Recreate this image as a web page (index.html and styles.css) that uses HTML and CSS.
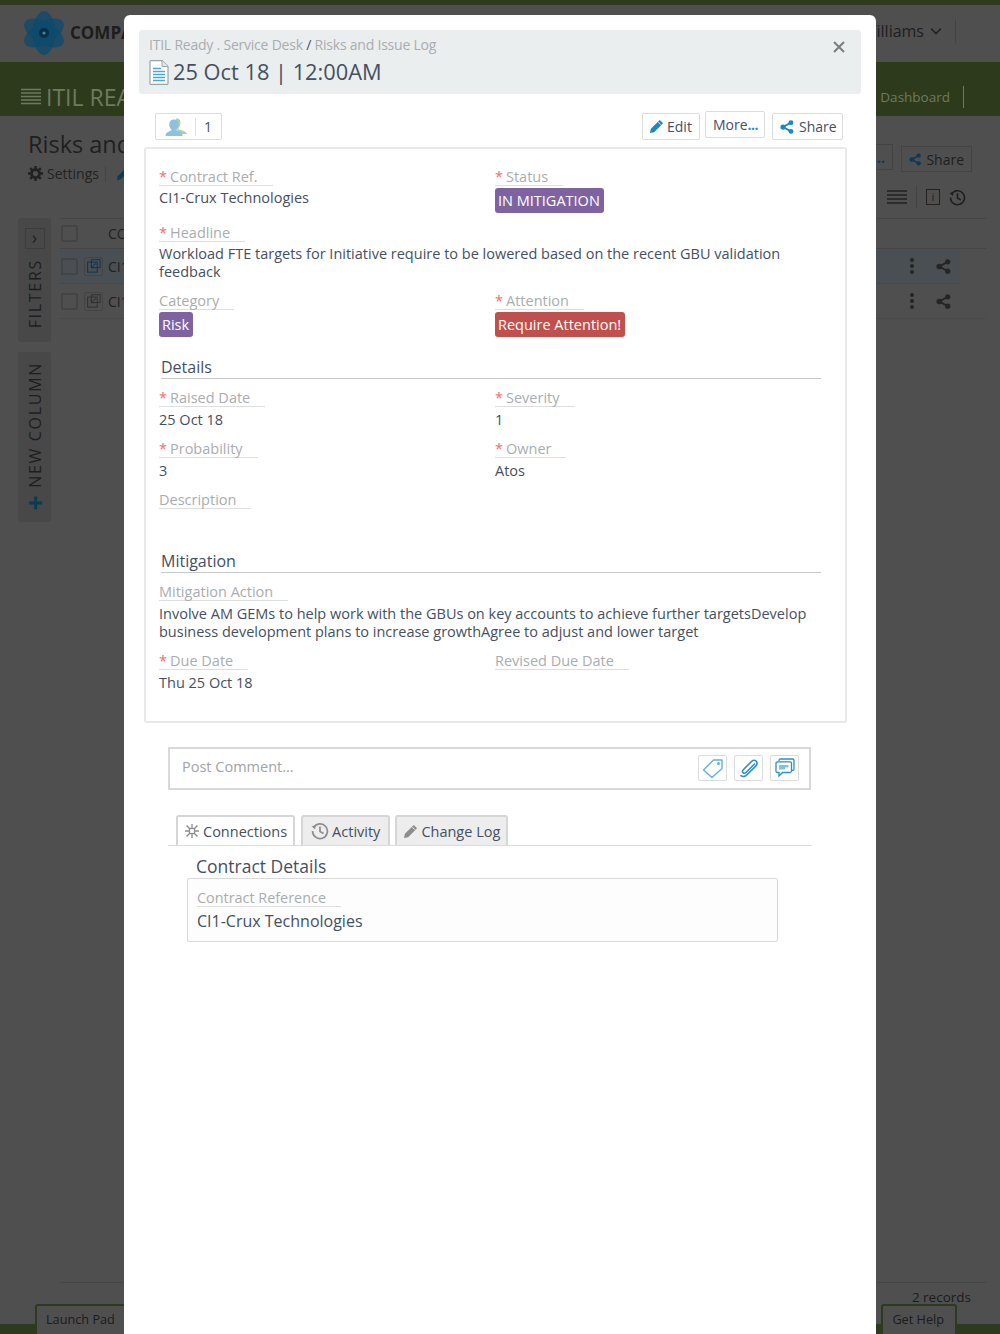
FILE: index.html
```html
<!DOCTYPE html>
<html lang="en">
<head>
<meta charset="utf-8">
<title>Risks and Issue Log</title>
<link rel="stylesheet" href="styles.css">
</head>
<body>
<svg class="defs" width="0" height="0" aria-hidden="true">
  <symbol id="share" viewBox="0 0 16 16"><path d="M3.5 8 12.5 3M3.5 8l9 5" fill="none" stroke="currentColor" stroke-width="2"/><circle cx="3.5" cy="8" r="3" fill="currentColor"/><circle cx="12.5" cy="3" r="2.8" fill="currentColor"/><circle cx="12.5" cy="13" r="2.8" fill="currentColor"/></symbol>
  <symbol id="clock" viewBox="0 0 18 18"><path d="M2.6 5.5A7.4 7.4 0 1 1 1.6 9" fill="none" stroke="currentColor" stroke-width="1.7"/><path d="M0.6 4.2 4.6 3.2 4.2 7.4Z" fill="currentColor"/><path d="M9 4.5V9.5L12.5 11.5" fill="none" stroke="currentColor" stroke-width="1.7"/></symbol>
  <symbol id="pencil" viewBox="0 0 16 16"><path d="M11.5 1 15 4.5 5.5 14 1 15 2 10.5Z" fill="currentColor"/><path d="M10 3.4 12.6 6" stroke="#fff" stroke-width=".9"/></symbol>
  <symbol id="link" viewBox="0 0 16 16"><rect x=".7" y="3.5" width="11" height="11.5" fill="none" stroke="currentColor" stroke-width="1.2"/><rect x="5" y=".8" width="10" height="9" fill="none" stroke="currentColor" stroke-width="1.2"/><path d="M10 5 5 10M5 6.5V10H8.5" fill="none" stroke="currentColor" stroke-width="1.2"/></symbol>
</svg>

<div class="page">
  <div class="strip"></div>
  <header class="top">
    <div class="brand">
      <svg class="logo" viewBox="0 0 44 46" width="44" height="46" aria-hidden="true">
        <g fill="#0e4a6b" fill-opacity=".8"><ellipse cx="22" cy="23" rx="11" ry="22"/><ellipse cx="22" cy="23" rx="11" ry="22" transform="rotate(60 22 23)"/><ellipse cx="22" cy="23" rx="11" ry="22" transform="rotate(120 22 23)"/></g>
        <circle cx="22" cy="23" r="5" fill="#0a2f45"/><circle cx="22" cy="23" r="1.6" fill="#3a87ad"/>
      </svg>
      <span class="brand-name">COMPA</span>
    </div>
    <div class="user"><span>Williams</span><svg viewBox="0 0 12 8" width="12" height="8" aria-hidden="true"><path d="M1 1.5 6 6.5 11 1.5" fill="none" stroke="#222" stroke-width="1.6"/></svg><i class="vbar"></i></div>
  </header>
  <nav class="nav">
    <div class="nav-left"><svg viewBox="0 0 20 18" width="20" height="18" aria-hidden="true"><path d="M0 1.5H20M0 5H20M0 8.5H20M0 12H20M0 15.5H20" stroke="#6f7a5f" stroke-width="1.4"/></svg><span>ITIL REA</span></div>
    <div class="nav-right"><span>Dashboard</span><i class="vbar"></i></div>
  </nav>
  <section class="title-row">
    <div>
      <h1 class="page-title">Risks and</h1>
      <div class="page-tools">
        <svg viewBox="0 0 16 16" width="15" height="15" aria-hidden="true"><circle cx="8" cy="8" r="4.300" fill="none" stroke="#222" stroke-width="3"/><path d="M8 0V3M8 13V16M0 8H3M13 8H16M2.300 2.300 4.500 4.500M11.500 11.500 13.700 13.700M13.700 2.300 11.500 4.500M4.500 11.500 2.300 13.700" stroke="#222" stroke-width="2.600"/></svg>
        <span>Settings</span><i class="vbar"></i>
        <svg class="tool-pencil" width="14" height="14"><use href="#pencil"/></svg>
      </div>
    </div>
    <div class="page-actions">
      <button class="dim-btn dim-more"><b>...</b></button>
      <button class="dim-btn dim-share"><svg width="15" height="15"><use href="#share"/></svg>Share</button>
    </div>
  </section>
  <div class="view-tools">
    <svg viewBox="0 0 20 14" width="20" height="14" aria-hidden="true"><path d="M0 1H20M0 5H20M0 9H20M0 13H20" stroke="#222" stroke-width="1.6"/></svg>
    <i class="vbar"></i>
    <span class="info">i</span>
    <svg width="17" height="17"><use href="#clock"/></svg>
  </div>
  <div class="work">
    <aside class="rails">
      <div class="rail rail-filters"><span class="chev">&#8250;</span><span class="rail-text">FILTERS</span></div>
      <div class="rail rail-new"><span class="rail-text"><b>+</b> NEW COLUMN</span></div>
    </aside>
    <div class="table">
      <div class="tr th"><span class="check"></span><span class="code">CO</span></div>
      <div class="tr hl"><span class="check"></span><span class="lnk on"><svg width="14" height="14"><use href="#link"/></svg></span><span class="code">CI1</span><span class="row-end"><span class="dots"><i></i><i></i><i></i></span><svg width="15" height="15"><use href="#share"/></svg></span></div>
      <div class="tr"><span class="check"></span><span class="lnk"><svg width="14" height="14"><use href="#link"/></svg></span><span class="code">CI1</span><span class="row-end"><span class="dots"><i></i><i></i><i></i></span><svg width="15" height="15"><use href="#share"/></svg></span></div>
    </div>
  </div>
  <footer class="foot">
    <div class="records"><span>2 records</span></div>
    <div class="foot-tabs"><span class="foot-tab">Launch Pad</span><span class="foot-tab">Get Help</span></div>
  </footer>
</div>

<div class="modal">
  <div class="m-head">
    <div class="crumbs">ITIL Ready . Service Desk <em>/</em> Risks and Issue Log</div>
    <div class="m-title">
      <svg viewBox="0 0 20 25" width="20" height="25" aria-hidden="true"><path d="M1 1.5Q1 .7 1.8 .7H13L19 6.5V23.5Q19 24.3 18.2 24.3H1.8Q1 24.3 1 23.5Z" fill="#fff" stroke="#9aa3a8" stroke-width="1.2"/><path d="M13 .7V6.5H19" fill="#e4e8ea" stroke="#9aa3a8" stroke-width="1"/><path d="M4 8.5H12M4 11.5H16M4 14.5H16M4 17.5H16M4 20.5H16" stroke="#4aa8d8" stroke-width="1.7"/></svg>
      <span>25 Oct 18 | 12:00AM</span>
    </div>
    <svg class="close" viewBox="0 0 12 12" width="12" height="12" aria-hidden="true"><path d="M1 1 11 11M11 1 1 11" stroke="#7d7d7d" stroke-width="2"/></svg>
  </div>

  <div class="m-actions">
    <div class="people">
      <svg viewBox="0 0 24 20" width="24" height="20" aria-hidden="true"><path d="M11 1.2c3 0 4.500 2 4.500 4.800 0 2-.8 3.700-2 4.800v1.500c3.500 1 7.500 2 8.500 4.700h-9z" fill="#a6d7a3"/><path d="M9 2.500c3 0 4.800 2.200 4.800 5 0 2.100-.9 3.800-2.100 4.900v1.200c2.800 1.100 5.300 2 5.800 4.400v1H.500v-1c.5-2.400 3-3.300 5.800-4.400v-1.200C5.100 11.300 4.200 9.600 4.200 7.500c0-2.800 1.800-5 4.800-5z" fill="#8fc1dc"/></svg>
      <i></i><span>1</span>
    </div>
    <div class="act-btns">
      <button class="btn btn-edit"><svg class="blue" width="15" height="15"><use href="#pencil"/></svg>Edit</button>
      <button class="btn btn-more">More<b>...</b></button>
      <button class="btn btn-share"><svg class="blue" width="14" height="14"><use href="#share"/></svg>Share</button>
    </div>
  </div>

  <div class="card">
    <div class="grid grid-top">
      <div class="field"><label class="lbl"><s>*</s>Contract Ref.</label><div class="val">CI1-Crux Technologies</div></div>
      <div class="field"><label class="lbl"><s>*</s>Status</label><span class="tag purple">IN MITIGATION</span></div>
      <div class="field wide"><label class="lbl"><s>*</s>Headline</label><div class="val">Workload FTE targets for Initiative require to be lowered based on the recent GBU validation feedback</div></div>
      <div class="field"><label class="lbl">Category</label><span class="tag purple">Risk</span></div>
      <div class="field"><label class="lbl"><s>*</s>Attention</label><span class="tag red">Require Attention!</span></div>
    </div>
    <h2 class="sect">Details</h2>
    <div class="grid">
      <div class="field"><label class="lbl"><s>*</s>Raised Date</label><div class="val">25 Oct 18</div></div>
      <div class="field"><label class="lbl"><s>*</s>Severity</label><div class="val">1</div></div>
      <div class="field"><label class="lbl"><s>*</s>Probability</label><div class="val">3</div></div>
      <div class="field"><label class="lbl"><s>*</s>Owner</label><div class="val">Atos</div></div>
      <div class="field wide desc"><label class="lbl">Description</label></div>
    </div>
    <h2 class="sect">Mitigation</h2>
    <div class="grid">
      <div class="field wide"><label class="lbl">Mitigation Action</label><div class="val">Involve AM GEMs to help work with the GBUs on key accounts to achieve further targetsDevelop business development plans to increase growthAgree to adjust and lower target</div></div>
      <div class="field"><label class="lbl"><s>*</s>Due Date</label><div class="val">Thu 25 Oct 18</div></div>
      <div class="field"><label class="lbl">Revised Due Date</label></div>
    </div>
  </div>

  <div class="comment">
    <span class="ph">Post Comment...</span>
    <span class="c-btn"><svg viewBox="0 0 22 20" width="22" height="20" aria-hidden="true"><path d="M1.500 12 11.500 2H20V10.500L10 19.500Z" fill="none" stroke="#5fb3dc" stroke-width="1.400" stroke-linejoin="round"/><circle cx="16.500" cy="5.500" r="1.500" fill="#5fb3dc"/></svg></span>
    <span class="c-btn"><svg viewBox="0 0 20 20" width="20" height="20" aria-hidden="true"><path d="M15.500 6 7 14.500c-1 1-2.300 1-3 .2s-.7-2 .3-3L12.500 3.500c1.800-1.800 4-1.500 5 0s.6 3.200-.8 4.600L8 16.800c-2.200 2.200-4.800 2.200-6 .8" fill="none" stroke="#2d8fc4" stroke-width="1.600" stroke-linecap="round"/></svg></span>
    <span class="c-btn"><svg viewBox="0 0 20 20" width="20" height="20" aria-hidden="true"><path d="M4 3V2.500Q4 1 5.500 1H17.500Q19 1 19 2.500V11Q19 12.500 17.500 12.500H17" fill="none" stroke="#2d8fc4" stroke-width="1.300"/><path d="M2.500 3.800H15Q16.500 3.800 16.500 5.300V13Q16.500 14.500 15 14.500H7.500L4 18V14.500H2.500Q1 14.500 1 13V5.300Q1 3.800 2.500 3.800Z" fill="#fff" stroke="#2d8fc4" stroke-width="1.300"/><path d="M4 7H13.500V9.500H10V11.500H4Z" fill="#7fc2e3"/></svg></span>
  </div>

  <div class="tabs">
    <span class="tab tab-conn"><svg viewBox="0 0 14 14" width="14" height="14" aria-hidden="true"><g stroke="#8d8d8d" stroke-width="1.300" fill="none"><path d="M7 0V4M7 10V14M0 7H4M10 7H14M1.500 1.500 4.500 4.500M12.500 1.500 9.500 4.500M1.500 12.500 4.500 9.500M12.500 12.500 9.500 9.500"/><rect x="4.500" y="4.500" width="5" height="5"/></g></svg>Connections</span>
    <span class="tab tab-act"><svg class="gray" width="18" height="18"><use href="#clock"/></svg>Activity</span>
    <span class="tab tab-log"><svg class="gray" width="15" height="15"><use href="#pencil"/></svg>Change Log</span>
  </div>

  <div class="contract">
    <h3 class="c-title">Contract Details</h3>
    <div class="c-box">
      <label class="lbl c-lbl">Contract Reference</label>
      <div class="c-val">CI1-Crux Technologies</div>
    </div>
  </div>
</div>
</body>
</html>
```

FILE: styles.css
```css
* { box-sizing: border-box; }
html, body { margin: 0; padding: 0; }
body {
  width: 1000px;
  height: 1334px;
  overflow: hidden;
  position: relative;
  background: #4f4f4f;
  font-family: "Open Sans", "Noto Sans", "Liberation Sans", sans-serif;
  color: #1f1f1f;
}
.defs { position: absolute; }
.page { height: 1334px; display: flex; flex-direction: column; background: #4f4f4f; }
.strip { height: 5px; background: #2d3a1d; }
.vbar { display: inline-block; width: 1px; background: #444; }

.top { height: 57px; display: flex; justify-content: space-between; align-items: center; padding: 0 44px 0 22px; }
.brand { display: flex; align-items: center; gap: 4px; margin-top: -2px; }
.brand-name { font-size: 17px; font-weight: 700; color: #1d1d1d; }
.user { display: flex; align-items: center; gap: 6px; font-size: 16px; color: #1e1e1e; margin-top: -6px; }
.user .vbar { height: 24px; margin-left: 7px; }

.nav { height: 54px; background: #2e3a1c; display: flex; justify-content: space-between; align-items: center; padding: 16px 36px 0 21px; color: #6f7a5f; }
.nav-left { display: flex; align-items: center; gap: 5px; font-size: 23px; }
.nav-right { display: flex; align-items: center; gap: 13px; font-size: 13.500px; }
.nav-right .vbar { height: 22px; background: #6f7a5f; }

.title-row { display: flex; justify-content: space-between; padding: 13px 28px 0 28px; height: 67px; }
.page-title { margin: 0; font-size: 23.500px; line-height: 30px; font-weight: 400; color: #1f1f1f; white-space: nowrap; }
.page-tools { font-size: 14px; display: flex; align-items: center; gap: 4px; margin-top: 5px; color: #222; }
.page-tools .vbar { height: 16px; margin: 0 6px 0 2px; }
.tool-pencil { color: #0b3a55; }
.page-actions { display: flex; gap: 8px; margin-top: 15px; align-items: flex-start; }
.dim-btn { height: 26px; border: 1px solid #444; background: #4f4f4f; font: 14px "Open Sans", sans-serif; color: #1e1e1e; display: flex; align-items: center; gap: 5px; padding: 0 7px; }
.dim-btn svg { color: #0b3a55; }
.dim-more { color: #0b3a55; width: 70px; justify-content: flex-end; }
.dim-share { margin-top: 2px; width: 71px; }

.view-tools { display: flex; justify-content: flex-end; align-items: center; gap: 9px; padding-right: 34px; height: 28px; color: #1f1f1f; }
.view-tools .vbar { height: 22px; }
.info { width: 14px; height: 16px; border: 1px solid #222; font-size: 11px; line-height: 14px; text-align: center; }

.work { display: flex; flex: 1; gap: 9px; padding: 7px 14px 0 18px; }
.rails { width: 33px; display: flex; flex-direction: column; gap: 10px; }
.rail { width: 33px; background: #484848; border-radius: 3px; display: flex; flex-direction: column; align-items: center; }
.rail-filters { height: 124px; padding-top: 10px; gap: 10px; }
.rail-new { height: 170px; padding-top: 10px; }
.chev { width: 20px; height: 21px; border: 1px solid #3d3d3d; text-align: center; font-size: 18px; line-height: 17px; color: #222; }
.rail-text { writing-mode: vertical-rl; transform: rotate(180deg); font-size: 16px; letter-spacing: 1.700px; color: #1e1e1e; white-space: nowrap; }
.rail-text b { color: #0b3a55; font-size: 27px; line-height: 20px; }

.table { flex: 1; border-top: 1px solid #454545; height: 107px; }
.tr { height: 35px; display: flex; align-items: center; gap: 5px; border-bottom: 1px dotted #444; font-size: 14px; color: #1f1f1f; }
.th { height: 30px; border-bottom: 1px solid #454545; }
.th .code { margin-left: 25px; }
.hl { background: #4a4f53; width: 900px; }
.check { width: 17px; height: 17px; border: 2px solid #444; border-radius: 2px; margin-left: 1px; flex: none; }
.lnk { width: 19px; height: 19px; border: 1px solid #444; border-radius: 2px; display: flex; align-items: center; justify-content: center; color: #333; margin-left: 1px; flex: none; }
.lnk.on { color: #0b3a55; }
.code { white-space: nowrap; width: 797px; overflow: hidden; }
.row-end { display: flex; align-items: center; gap: 22px; color: #252525; flex: none; }
.dots { display: flex; flex-direction: column; gap: 2px; }
.dots i { width: 4px; height: 4px; border-radius: 50%; background: #252525; }

.records { margin: 0 14px 0 60px; border-top: 1px solid #454545; height: 22px; text-align: right; font-size: 13.500px; padding: 5px 15px 0 0; color: #1b1b1b; }
.foot-tabs { height: 30px; display: flex; justify-content: space-between; padding: 0 43px 0 35px; border-bottom: 10px solid #2d3a1d; }
.foot-tab { height: 30px; border: 2px solid #2d3a1d; border-bottom: none; border-radius: 3px 3px 0 0; font-size: 12.700px; line-height: 26px; padding: 0 11px 0 9px; background: #4f4f4f; color: #1b1b1b; }

.modal { position: absolute; left: 124px; top: 15px; width: 752px; height: 1319px; background: #fff; border-radius: 6px 6px 0 0; padding: 15px 15px 0 15px; color: #45505f; }
.m-head { position: relative; height: 64px; background: #ebeeef; border-radius: 3px; padding: 5px 10px 0 10px; }
.crumbs { font-size: 14px; line-height: 19px; letter-spacing: -.22px; color: #a9adb0; }
.crumbs em { font-style: normal; color: #45505f; }
.m-title { display: flex; align-items: center; gap: 4px; margin-top: 4px; font-size: 21.800px; line-height: 28px; color: #45505f; }
.close { position: absolute; right: 16px; top: 11px; }

.m-actions { display: flex; justify-content: space-between; align-items: flex-start; padding: 17px 18px 0 16px; height: 53px; }
.people { width: 67px; height: 27px; border: 1px solid #dcdcdc; border-radius: 2px; display: flex; align-items: center; padding-left: 9px; font-size: 14px; margin-top: 2px; }
.people i { width: 1px; height: 18px; background: #e2e2e2; margin: 0 8px 0 6px; }
.act-btns { display: flex; gap: 5px; align-items: flex-start; }
.btn { height: 27px; border: 1px solid #dcdcdc; border-radius: 2px; background: #fff; font: 14px "Open Sans", sans-serif; color: #45505f; display: flex; align-items: center; margin-top: 2px; }
.btn-edit { width: 58px; gap: 3px; padding: 0 0 0 6px; }
.btn-more { width: 60px; margin-top: 0; padding: 0 0 0 7px; }
.btn-more b { color: #2d8fc4; font-weight: 700; letter-spacing: -.5px; }
.btn-share { width: 71px; gap: 5px; padding: 0 0 0 7px; margin-left: 2px; }
.blue { color: #1a87c6; }
.gray { color: #8d8d8d; }

.card { width: 703px; height: 576px; margin-left: 5px; border: 2px solid #e9e9e9; border-radius: 3px; padding: 19px 24px 0 13px; }
.grid { display: grid; grid-template-columns: 336px 1fr; row-gap: 11px; margin-top: 10.500px; }
.grid-top { row-gap: 11.500px; margin-top: 0; }
.field.wide { grid-column: 1 / -1; }
.lbl { display: block; width: fit-content; font-size: 14.500px; line-height: 17px; color: #a9adb0; border-bottom: 1px solid #dedede; padding-right: 15px; }
.lbl s { text-decoration: none; color: #f36a6a; margin-right: 3px; }
.val { font-size: 14.500px; line-height: 18px; color: #45505f; margin-top: 4px; }
.grid-top .val { margin-top: 3px; }
.tag { display: block; width: fit-content; height: 25px; line-height: 25px; padding: 0 4px 0 3px; border-radius: 3px; color: #fff; font-size: 14.500px; margin: 2px 0 -1px; }
.purple { background: #7f63a1; }
.red { background: #c0504d; }
.sect { font-size: 16px; line-height: 22px; font-weight: 400; color: #45505f; margin: 19.500px 0 0 2px; border-bottom: 1px solid #c8c8c8; width: 660px; }
.desc { height: 39px; }

.comment { width: 643px; height: 43px; margin: 24px 0 0 29px; border: 2px solid #d9d9d9; display: flex; align-items: flex-start; gap: 7px; padding: 6px 10px 0 12px; }
.ph { flex: 1; font-size: 14.500px; line-height: 24px; color: #a0a4a8; }
.c-btn { width: 29px; height: 26px; border: 1px solid #dcdcdc; border-radius: 2px; display: flex; align-items: center; justify-content: center; }

.tabs { width: 644px; height: 31px; margin: 25px 0 0 29px; padding-left: 8px; border-bottom: 1px solid #dcdcdc; display: flex; align-items: flex-start; }
.tab { height: 30px; background: #ededed; border: 2px solid #d6d6d6; border-bottom: none; border-radius: 3px 3px 0 0; font-size: 14.500px; display: flex; align-items: center; color: #45505f; white-space: nowrap; }
.tab-conn { background: #fff; padding-left: 7px; padding-right: 6px; gap: 4px; }
.tab-act { margin-left: 6px; padding-left: 8px; padding-right: 8px; gap: 3px; }
.tab-log { margin-left: 5px; padding-left: 6px; padding-right: 6px; gap: 3px; }

.contract { margin: 8px 0 0 48px; }
.c-title { margin: 0 0 0 9px; font-size: 17.500px; line-height: 24px; font-weight: 400; color: #45505f; }
.c-box { width: 591px; height: 64px; border: 1px solid #d9d9d9; border-radius: 2px; padding: 10px 9px 0 9px; background: #fdfdfd; }
.c-lbl { font-size: 14.400px; }
.c-val { font-size: 16px; line-height: 22px; color: #45505f; margin-top: 3px; }
```
